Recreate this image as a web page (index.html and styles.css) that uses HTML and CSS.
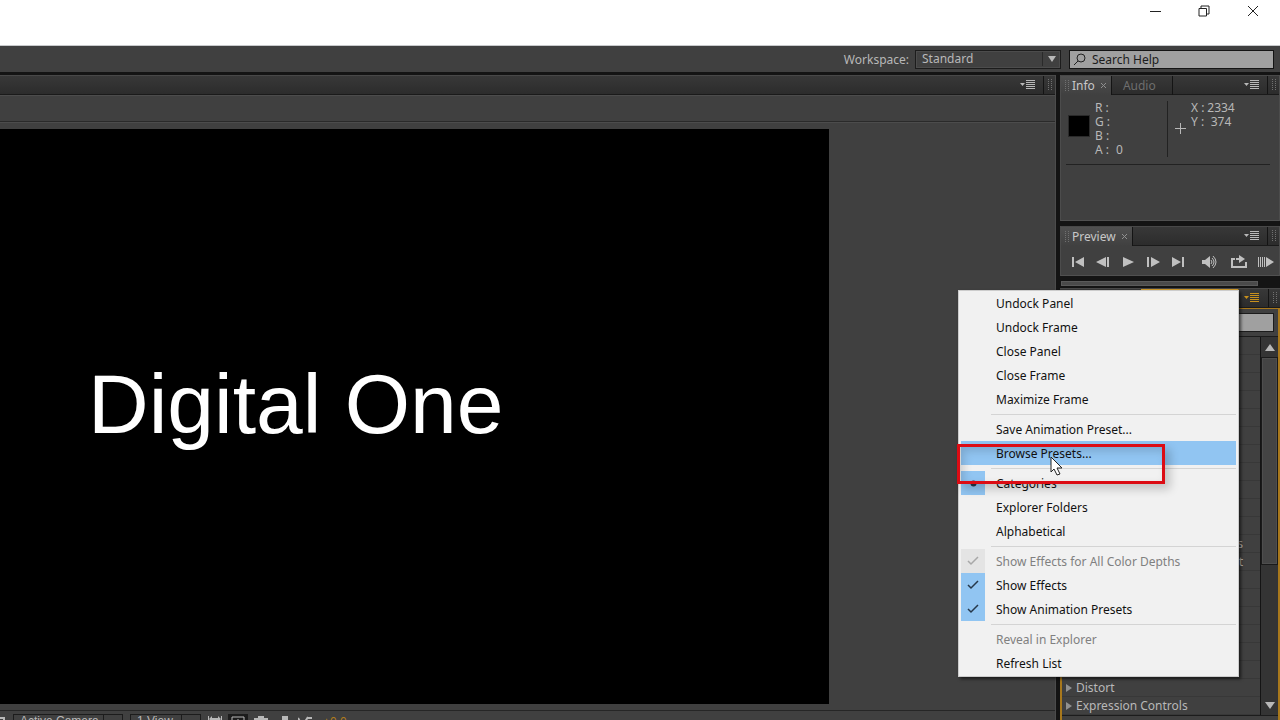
FILE: index.html
```html
<!DOCTYPE html>
<html lang="en">
<head>
    <meta charset="UTF-8">
    <meta name="viewport" content="width=device-width, initial-scale=1.0">
    <title>Digital One</title>
    <link rel="stylesheet" href="styles.css">
</head>
<body>

<!-- shared icons -->
<svg class="defs" aria-hidden="true">
    <symbol id="flyout" viewBox="0 0 16 10"><path d="M0 3h5L2.500 6z"/><path d="M6 0h9v1H6zM6 2h9v1H6zM6 4h9v1H6zM6 6h9v1H6zM6 8h9v1H6z"/></symbol>
    <symbol id="grip" viewBox="0 0 4 12"><path d="M0 0h1v1H0zM3 0h1v1H3zM0 2h1v1H0zM3 2h1v1H3zM0 4h1v1H0zM3 4h1v1H3zM0 6h1v1H0zM3 6h1v1H3zM0 8h1v1H0zM3 8h1v1H3zM0 10h1v1H0zM3 10h1v1H3z"/></symbol>
    <symbol id="cross" viewBox="0 0 7 7"><path d="M1 1l5 5M6 1L1 6" fill="none" stroke="currentColor"/></symbol>
    <symbol id="check" viewBox="0 0 12 10"><path d="M1 5l3 3 7-7" fill="none" stroke="currentColor" stroke-width="1.500"/></symbol>
</svg>

<div class="app">
    <header class="titlebar">
        <button class="win-btn" aria-label="Minimize"><svg width="12" height="12"><path d="M0 6.500h11"/></svg></button>
        <button class="win-btn" aria-label="Restore"><svg width="12" height="12"><path d="M1 3.500h7.500V11H1zM3 3V1h8v8H9"/></svg></button>
        <button class="win-btn" aria-label="Close"><svg width="12" height="12"><path d="M1 1l10 10M11 1L1 11"/></svg></button>
    </header>

    <div class="toolbar">
        <label for="workspace">Workspace:</label>
        <div class="select-box">
            <select id="workspace"><option>Standard</option></select>
            <svg width="8" height="6"><path d="M0 0h8L4 6z"/></svg>
        </div>
        <div class="search">
            <svg width="13" height="13"><circle cx="8" cy="5" r="4"/><path d="M5 8l-4 4"/></svg>
            <input type="text" aria-label="Search Help" placeholder="Search Help">
        </div>
    </div>

    <div class="main">
        <section class="viewer">
            <div class="tabs">
                <button class="flyout" aria-label="Panel menu"><svg><use href="#flyout"/></svg></button>
                <span class="grip end"><svg><use href="#grip"/></svg></span>
            </div>
            <div class="viewer-head"></div>
            <div class="stage">
                <div class="canvas"><h1>Digital One</h1></div>
            </div>
            <div class="viewer-bar">
                <svg class="chip" width="6" height="12"><path d="M0 1h5v11H3V3H0z"/></svg>
                <select class="camera" aria-label="3D view"><option>Active Camera</option></select>
                <select class="views" aria-label="View layout"><option>1 View</option></select>
                <div class="bar-icons">
                    <svg width="14" height="8"><path d="M0 0h1v6H0zM13 0h1v6h-1zM1 3l3-3v2h6V0l3 3-3 3V4H4v2z"/></svg>
                    <svg class="boxed" width="20" height="14"><path d="M4 3h12v9H4zM10 5v6M7 8h6" fill="none" stroke="currentColor"/></svg>
                    <svg width="14" height="12"><path d="M0 2h4V0h6v2h4v8H0z"/></svg>
                    <svg class="person" width="6" height="12"><path d="M0 0h6v12H0z"/></svg>
                    <svg width="14" height="12"><path d="M0 2l4 7M5 9L10 1M9 2h5M8 6h5" fill="none" stroke="currentColor" stroke-width="2"/></svg>
                    <span class="exposure">+0.0</span>
                </div>
            </div>
        </section>

        <aside class="side">
            <section class="panel info">
                <div class="tabs">
                    <button class="tab active"><svg class="grip-icon"><use href="#grip"/></svg>Info<svg class="cross"><use href="#cross"/></svg></button>
                    <button class="tab idle">Audio</button>
                    <button class="flyout" aria-label="Panel menu"><svg><use href="#flyout"/></svg></button>
                    <span class="grip"><svg><use href="#grip"/></svg></span>
                </div>
                <div class="info-body">
                    <div class="swatch"></div>
                    <dl class="rgb">
                        <dt>R :</dt><dd></dd>
                        <dt>G :</dt><dd></dd>
                        <dt>B :</dt><dd></dd>
                        <dt>A :</dt><dd>0</dd>
                    </dl>
                    <svg class="plus" width="11" height="11"><path d="M5 0h1v5h5v1H6v5H5V6H0V5h5z"/></svg>
                    <dl class="xy">
                        <dt>X :</dt><dd>2334</dd>
                        <dt>Y :</dt><dd>374</dd>
                    </dl>
                </div>
            </section>

            <section class="panel preview">
                <div class="tabs">
                    <button class="tab active"><svg class="grip-icon"><use href="#grip"/></svg>Preview<svg class="cross"><use href="#cross"/></svg></button>
                    <button class="flyout" aria-label="Panel menu"><svg><use href="#flyout"/></svg></button>
                    <span class="grip"><svg><use href="#grip"/></svg></span>
                </div>
                <div class="transport">
                    <button aria-label="First frame"><svg width="16" height="12"><path d="M2 1h2v10H2zM14 1v10L5 6z"/></svg></button>
                    <button aria-label="Previous frame"><svg width="16" height="12"><path d="M11 1v10L1 6zM12 1h2v10h-2z"/></svg></button>
                    <button aria-label="Play"><svg width="16" height="12"><path d="M3 1v10l11-5z"/></svg></button>
                    <button aria-label="Next frame"><svg width="16" height="12"><path d="M2 1h2v10H2zM6 1v10l9-5z"/></svg></button>
                    <button aria-label="Last frame"><svg width="16" height="12"><path d="M2 1v10l9-5zM12 1h2v10h-2z"/></svg></button>
                    <button class="sound" aria-label="Audio"><svg width="20" height="14"><path d="M3 5h3l5-4v12L6 9H3z"/><path d="M12 5q2 2 0 4M13 3q4 4 0 8M14 1q6 6 0 12" fill="none" stroke="currentColor"/></svg></button>
                    <button aria-label="Loop"><svg width="20" height="14"><path d="M6 4H3v8h14V7" fill="none" stroke="currentColor" stroke-width="2"/><path d="M7 3h3V0l6 4-6 4V5H7z"/></svg></button>
                    <button aria-label="RAM preview"><svg width="16" height="12"><path d="M0 1h1v10H0zM2 1h1v10H2zM4 1h1v10H4zM6 1h1v10H6zM8 1v10l8-5z"/></svg></button>
                </div>
            </section>

            <div class="hscroll"></div>

            <section class="panel effects">
                <div class="tabs">
                    <span class="tab current"></span>
                    <button class="flyout" aria-label="Panel menu"><svg><use href="#flyout"/></svg></button>
                    <span class="grip"><svg><use href="#grip"/></svg></span>
                </div>
                <div class="effects-body">
                    <div class="filter"><input type="text" aria-label="Filter effects"></div>
                    <div class="list-wrap">
                        <ul class="list">
                            <li></li><li></li><li></li><li></li><li></li><li></li>
                            <li></li><li></li><li></li><li></li><li></li>
                            <li class="cut">s</li>
                            <li class="cut">t</li>
                            <li></li><li></li><li></li><li></li><li></li><li></li>
                            <li><svg width="6" height="8"><path d="M0 0v8l6-4z"/></svg>Distort</li>
                            <li><svg width="6" height="8"><path d="M0 0v8l6-4z"/></svg>Expression Controls</li>
                        </ul>
                        <div class="vscroll">
                            <button aria-label="Scroll up"><svg width="10" height="7"><path d="M0 7h10L5 0z"/></svg></button>
                            <div class="thumb"></div>
                            <button class="down" aria-label="Scroll down"><svg width="10" height="7"><path d="M0 0h10L5 7z"/></svg></button>
                        </div>
                    </div>
                </div>
            </section>
        </aside>
    </div>

    <div class="menu" role="menu">
        <button role="menuitem">Undock Panel</button>
        <button role="menuitem">Undock Frame</button>
        <button role="menuitem">Close Panel</button>
        <button role="menuitem">Close Frame</button>
        <button role="menuitem">Maximize Frame</button>
        <hr>
        <button role="menuitem">Save Animation Preset...</button>
        <div class="hot">
            <button role="menuitem">Browse Presets...</button>
            <div class="marker"></div>
            <svg class="cursor" width="13" height="20"><path d="M1 1v15l3-3 3 6 3-1-3-6h5z"/></svg>
        </div>
        <hr>
        <button role="menuitem"><span class="mark"><svg width="7" height="7"><circle cx="3.500" cy="3.500" r="3" fill="currentColor"/></svg></span>Categories</button>
        <button role="menuitem">Explorer Folders</button>
        <button role="menuitem">Alphabetical</button>
        <hr>
        <button role="menuitem" disabled><span class="mark"><svg width="12" height="10"><use href="#check"/></svg></span>Show Effects for All Color Depths</button>
        <button role="menuitem"><span class="mark"><svg width="12" height="10"><use href="#check"/></svg></span>Show Effects</button>
        <button role="menuitem"><span class="mark"><svg width="12" height="10"><use href="#check"/></svg></span>Show Animation Presets</button>
        <hr>
        <button role="menuitem" disabled>Reveal in Explorer</button>
        <button role="menuitem">Refresh List</button>
    </div>
</div>

</body>
</html>
```
FILE: styles.css
```css
* {
    box-sizing: border-box;
}

body {
    margin: 0;
    font-family: "Noto Sans", "Open Sans", sans-serif;
    font-size: 12px;
    color: #b8b8b8;
    background-color: #404040;
}

button, input, select {
    font: inherit;
    color: inherit;
    margin: 0;
    padding: 0;
    border: none;
    border-radius: 0;
    background: none;
}

select {
    appearance: none;
}

svg {
    display: block;
    flex: none;
    fill: currentColor;
}

.defs {
    position: absolute;
    width: 0;
    height: 0;
}

.app {
    position: relative;
    display: flex;
    flex-direction: column;
    height: 100vh;
    overflow: hidden;
}

/* window title bar */
.titlebar {
    display: flex;
    justify-content: flex-end;
    height: 46px;
    background-color: #fff;
    border-bottom: 1px solid #c8cacc;
}

.win-btn {
    display: flex;
    align-items: flex-start;
    justify-content: center;
    width: 49px;
    padding-top: 5px;
}

.win-btn:first-child {
    width: 46px;
}

.win-btn:last-child {
    width: 50px;
    margin-right: 2px;
}

.win-btn svg {
    fill: none;
    stroke: #222;
}

.toolbar {
    display: flex;
    align-items: center;
    justify-content: flex-end;
    height: 29px;
    padding-right: 6px;
    border-bottom: 3px solid #141414;
}

.select-box {
    display: flex;
    align-items: center;
    width: 146px;
    height: 19px;
    margin: 0 8px 0 6px;
    padding-right: 4px;
    border: 1px solid #1c1c1c;
    box-shadow: inset 0 0 0 1px #4c4c4c;
}

.select-box select {
    flex: 1;
    height: 14px;
    margin-right: 5px;
    padding-left: 6px;
    line-height: 14px;
    border-right: 1px solid #2a2a2a;
}

.search {
    display: flex;
    align-items: center;
    gap: 6px;
    width: 205px;
    height: 19px;
    padding-left: 3px;
    color: #1c1c1c;
    background-color: #a0a0a0;
    border: 1px solid #141414;
}

.search svg {
    fill: none;
    stroke: #222;
}

.search input {
    width: 160px;
}

.search input::placeholder {
    color: #1c1c1c;
}

.main {
    flex: 1;
    min-height: 0;
    display: flex;
    gap: 4px;
    background-color: #141414;
}

/* tab strips */
.tabs {
    display: flex;
    flex: none;
    height: 20px;
    background: linear-gradient(#383838, #2c2c2c);
    border-top: 1px solid #484848;
    border-bottom: 1px solid #1a1a1a;
}

.tab {
    display: flex;
    align-items: center;
    height: 19px;
    border-right: 1px solid #141414;
}

.tab.active {
    gap: 3px;
    padding: 0 4px;
    color: #c8c8c8;
    background: linear-gradient(#505050, #404040);
}

.tab.idle {
    padding: 0 16px 0 11px;
    color: #6e6e6e;
}

.grip-icon, .grip svg {
    width: 4px;
    height: 12px;
    color: #707070;
}

.cross {
    width: 7px;
    height: 7px;
    margin-left: 2px;
    color: #909090;
}

.flyout {
    margin-left: auto;
    padding-right: 7px;
}

.flyout svg {
    width: 16px;
    height: 10px;
}

.grip {
    display: flex;
    align-items: center;
    width: 12px;
    padding-left: 4px;
    border-left: 1px solid #141414;
}

/* composition viewer */
.viewer {
    flex: 1;
    min-width: 0;
    display: flex;
    flex-direction: column;
    background-color: #404040;
    border-right: 1px solid #4c4c4c;
}

.viewer-head {
    height: 27px;
    border-top: 1px solid #4c4c4c;
    border-bottom: 1px solid #2a2a2a;
}

.stage {
    flex: 1;
    min-height: 0;
    padding: 6px 226px 6px 0;
    border-top: 1px solid #4c4c4c;
}

.canvas {
    display: flex;
    align-items: center;
    height: 100%;
    padding: 0 0 26px 88px;
    background-color: #000;
}

.canvas h1 {
    margin: 0;
    font-family: "Liberation Sans", Arial, sans-serif;
    font-size: 84px;
    font-weight: normal;
    line-height: 84px;
    white-space: nowrap;
    color: #fff;
}

.viewer-bar {
    display: flex;
    align-items: flex-start;
    gap: 7px;
    height: 28px;
    margin-bottom: -18px;
    padding-top: 3px;
    border-top: 1px solid #262626;
}

.viewer-bar select {
    height: 18px;
    padding-left: 6px;
    padding-bottom: 4px;
    font-family: "Liberation Sans", Arial, sans-serif;
    line-height: 12px;
    border: 1px solid #1c1c1c;
    background: linear-gradient(#1c1c1c, #1c1c1c) right 18px top / 1px 18px no-repeat;
}

.chip {
    margin-top: 2px;
}

.camera {
    width: 110px;
}

.views {
    width: 71px;
}

.bar-icons {
    display: flex;
    gap: 6px;
    padding-top: 2px;
}

.bar-icons .boxed {
    margin-top: -2px;
    background-color: #1c1c1c;
}

.bar-icons .person {
    margin: 0 4px 0 8px;
}

.exposure {
    padding-left: 5px;
    font-family: "Liberation Sans", Arial, sans-serif;
    line-height: 12px;
    color: #b07c1c;
}

/* right column */
.side {
    flex: none;
    width: 220px;
    display: flex;
    flex-direction: column;
}

.panel {
    background-color: #404040;
    border-left: 1px solid #4c4c4c;
    border-right: 1px solid #4c4c4c;
}

.info {
    height: 146px;
    margin-bottom: 5px;
    border-bottom: 1px solid #505050;
}

.info-body {
    display: flex;
    height: 70px;
    margin: 0 9px 0 5px;
    padding-top: 6px;
    border-bottom: 1px solid #222;
}

dl {
    display: grid;
    align-content: start;
    grid-auto-rows: 14px;
    line-height: 14px;
    margin: 0;
}

dd {
    margin: 0;
}

.swatch {
    width: 22px;
    height: 22px;
    margin: 14px 5px 0 2px;
    background-color: #000;
    border: 1px solid #2a2a2a;
}

.rgb {
    width: 73px;
    height: 56px;
    grid-template-columns: 21px 1fr;
    border-right: 1px solid #222;
}

.plus {
    margin: 22px 5px 0 7px;
}

.xy {
    grid-template-columns: 16px 28px;
}

.xy dd {
    text-align: center;
}

.preview {
    height: 50px;
    border-bottom: 1px solid #505050;
}

.transport {
    display: flex;
    align-items: center;
    gap: 9px;
    height: 31px;
    padding-left: 9px;
    color: #c0c0c0;
}

.sound {
    margin: 0 1px 0 4px;
}

.hscroll {
    height: 5px;
    margin: 5px 22px 2px 1px;
    background-color: #4a4a4a;
    border: 1px solid #5a5a5a;
}

.effects {
    flex: 1;
    min-height: 0;
    display: flex;
    flex-direction: column;
    border: none;
}

.effects .flyout {
    color: #c8901c;
    padding-right: 8px;
}

.current {
    width: 98px;
    margin-left: 81px;
    border-top: 1px solid #d09a2c;
}

.effects-body {
    flex: 1;
    min-height: 0;
    display: flex;
    flex-direction: column;
    border: 2px solid #a8781c;
    border-top-width: 1px;
    border-bottom: none;
}

.filter {
    padding: 4px;
    border-bottom: 1px solid #1c1c1c;
}

.filter input {
    display: block;
    width: 100%;
    height: 19px;
    background-color: #a0a0a0;
    border: 1px solid #1c1c1c;
}

.list-wrap {
    display: flex;
    flex: 1;
    min-height: 0;
    margin-bottom: 4px;
    border-bottom: 1px solid #1c1c1c;
}

.list {
    flex: 1;
    margin: 0;
    padding: 0;
    list-style: none;
    overflow: hidden;
}

.list li {
    display: flex;
    align-items: center;
    gap: 4px;
    height: 18px;
    padding-left: 4px;
    border-bottom: 1px solid #383838;
}

.list svg {
    color: #909090;
}

.list .cut {
    justify-content: flex-end;
    padding-right: 17px;
}

.vscroll {
    display: flex;
    flex-direction: column;
    width: 18px;
    background-color: #343434;
    border-left: 1px solid #141414;
}

.vscroll button {
    display: flex;
    align-items: center;
    justify-content: center;
    height: 20px;
}

.vscroll .down {
    margin-top: auto;
}

.thumb {
    height: 208px;
    background-color: #444;
    border: 1px solid #1a1a1a;
    box-shadow: inset 0 0 0 1px #4e4e4e;
}

/* popup menu over the panels */
.menu {
    position: absolute;
    top: 290px;
    right: 41px;
    width: 281px;
    padding: 0 2px 1px;
    color: #111;
    background-color: #f1f1f1;
    border: 1px solid #ccc;
    box-shadow: 2px 2px 3px rgba(0, 0, 0, 0.6);
}

.menu button {
    display: flex;
    align-items: center;
    width: 100%;
    height: 24px;
    padding-left: 35px;
    text-align: left;
    white-space: nowrap;
}

.menu button:disabled {
    color: #808080;
}

.menu hr {
    height: 1px;
    margin: 3px 0 2px 30px;
    border: none;
    background-color: #d4d4d4;
}

.mark {
    display: flex;
    align-items: center;
    justify-content: center;
    width: 24px;
    height: 24px;
    margin: 0 11px 0 -35px;
    color: #26384a;
    background-color: #91c5f2;
}

.menu button:disabled .mark {
    color: #a8a8a8;
    background-color: #e4e4e4;
}

.hot {
    position: relative;
    background-color: #91c5f2;
}

.marker {
    position: absolute;
    z-index: 1;
    top: 3px;
    left: -4px;
    width: 208px;
    height: 40px;
    border: 3px solid #dc0c14;
    box-shadow: 5px 5px 9px rgba(0, 0, 0, 0.2), inset 4px 4px 8px rgba(0, 0, 0, 0.15);
}

.cursor {
    position: absolute;
    z-index: 2;
    top: 15px;
    left: 89px;
    fill: #fff;
    stroke: #222;
}
```
